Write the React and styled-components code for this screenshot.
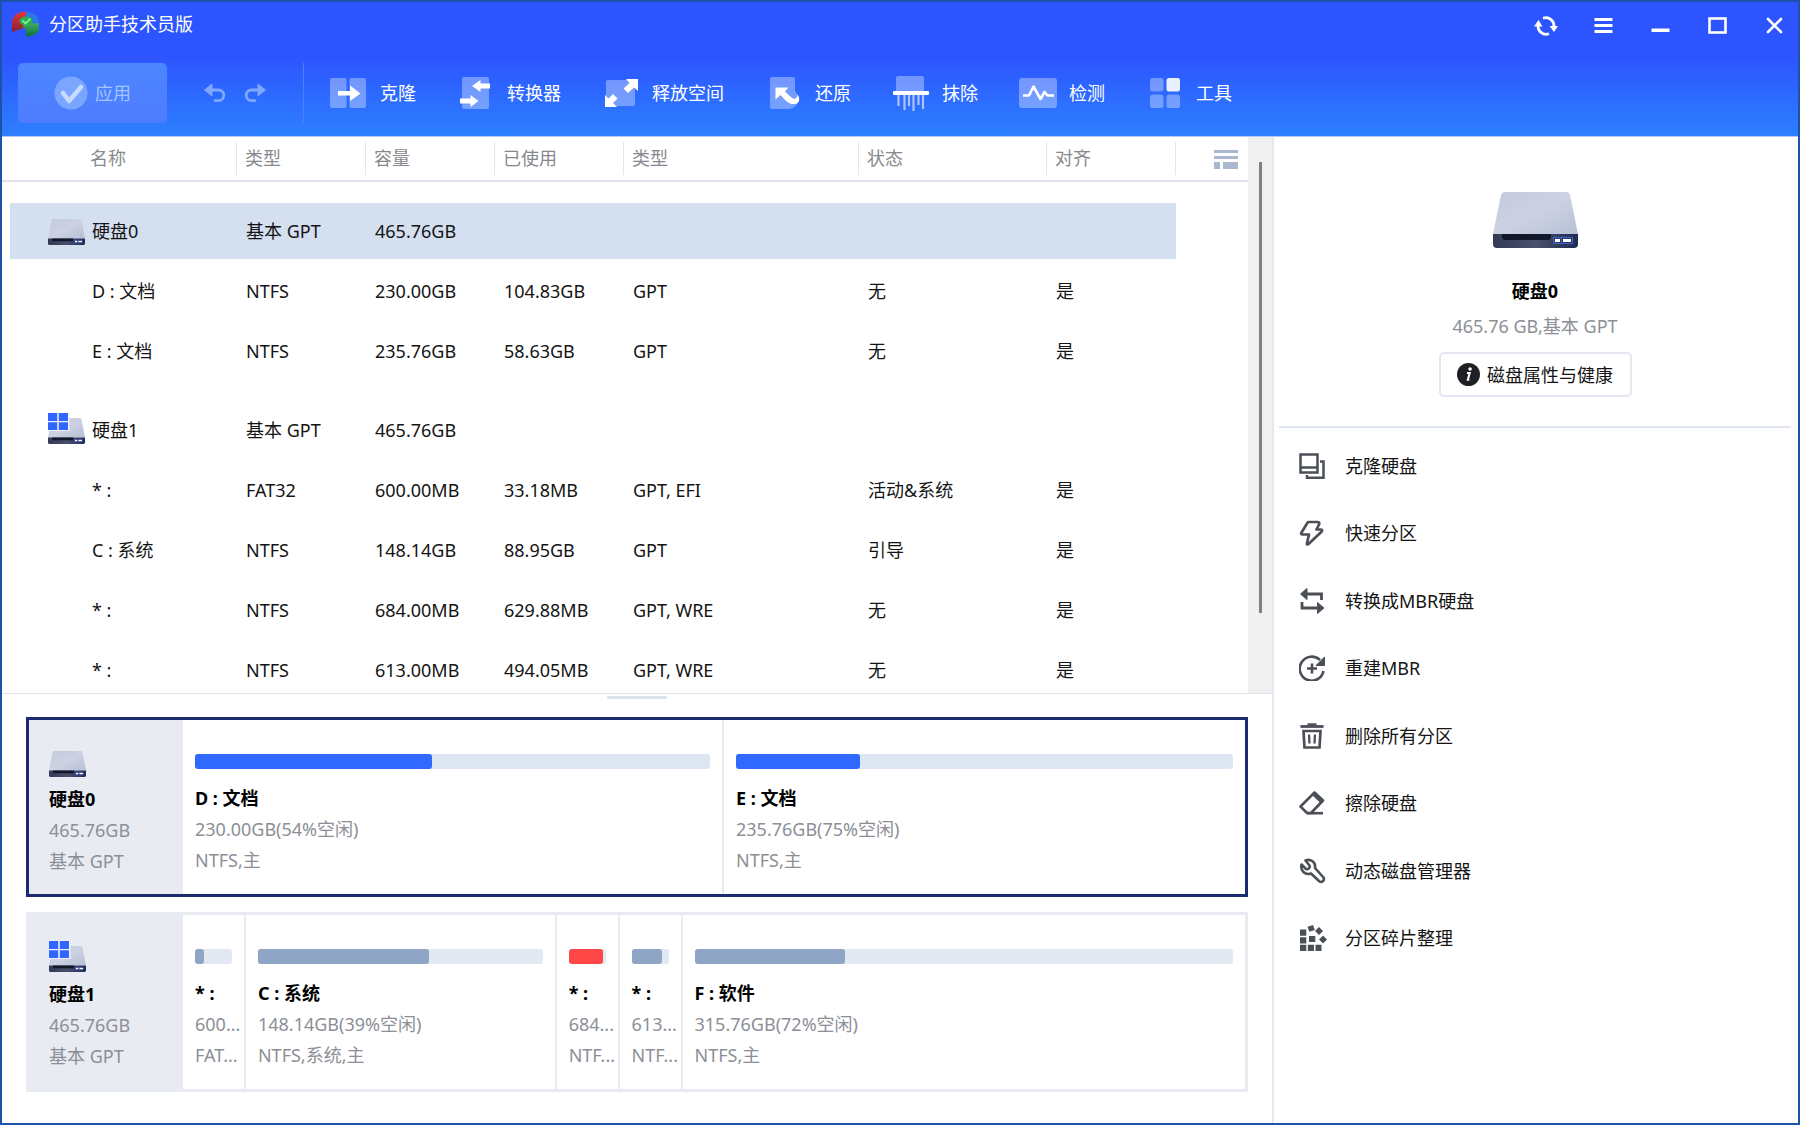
import React from "react";
import styled, { createGlobalStyle, css } from "styled-components";

const GlobalStyle = createGlobalStyle`
  *, *::before, *::after { box-sizing: border-box; }
  body {
    margin: 0;
    background: #fff;
    color: #141414;
    font: 18px/24px "Noto Sans", "Noto Sans CJK SC", sans-serif;
  }
  button {
    margin: 0;
    padding: 0;
    border: 0;
    background: none;
    color: inherit;
    font: inherit;
    cursor: pointer;
  }
  svg { display: block; flex: none; }
`;

/* ---------- window ---------- */

const Window = styled.div`
  display: flex;
  flex-direction: column;
  height: 100vh;
  border: 2px solid #1d52a8;
`;

const TopArea = styled.header`
  flex: none;
  color: #fff;
  background: linear-gradient(#2d55ff 0, #2d55ff 56px, #2d80ff 100%);
  border-bottom: 1px solid #b4c6f8;
`;

const TitleBar = styled.div`
  display: flex;
  align-items: center;
  justify-content: space-between;
  height: 44px;
  padding: 0 4px 0 9px;
`;

const Title = styled.h1`
  display: flex;
  align-items: center;
  gap: 9px;
  margin: 0;
  font-size: 18px;
  font-weight: 400;
`;

const WindowButtons = styled.div`
  display: flex;
  gap: 17px;
`;

const WindowButton = styled.button`
  display: grid;
  place-items: center;
  width: 40px;
  height: 40px;
  margin-top: 3px;
`;

const Toolbar = styled.nav`
  display: flex;
  align-items: center;
  padding: 17px 16px 13px;
`;

const ApplyButton = styled.button`
  display: flex;
  align-items: center;
  justify-content: center;
  gap: 7px;
  width: 149px;
  height: 60px;
  border-radius: 5px;
  color: #a3c4ff;
  background: linear-gradient(#4b86ff, #4f7cff);
`;

const HistoryButtons = styled.div`
  display: flex;
  gap: 16px;
  height: 60px;
  margin-right: 26px;
  padding: 0 36px;
  border-right: 1px solid #4f7fff;
  color: #80a8ff;
`;

const ToolList = styled.div`
  display: flex;
  gap: 41px;
`;

const ToolButton = styled.button`
  display: flex;
  align-items: center;
  gap: 12px;
  height: 60px;
  white-space: nowrap;
`;

const Body = styled.div`
  display: grid;
  grid-template-columns: minmax(0, 1fr) 526px;
  flex: 1;
  min-height: 0;
`;

const Main = styled.main`
  display: flex;
  flex-direction: column;
  min-height: 0;
`;

/* ---------- partition table ---------- */

const TablePane = styled.section`
  display: grid;
  grid-template-columns: minmax(0, 1fr) 24px;
  flex: 1;
  min-height: 0;
  border-bottom: 1px solid #dfe3ee;
`;

const TableScroll = styled.div`
  overflow-y: auto;
  scrollbar-width: none;
`;

const ScrollTrack = styled.div`
  padding: 25px 10px 0 11px;
  background: #f0f0f0;
`;

const ScrollThumb = styled.div`
  height: 85%;
  width: 3px;
  background: #808080;
`;

const Table = styled.table`
  width: 100%;
  table-layout: fixed;
  border-collapse: separate;
  border-spacing: 0;
`;

const HeadCell = styled.th`
  height: 45px;
  padding: 0;
  border-bottom: 2px solid #dfe3ee;
  color: #87898e;
  font-weight: 400;
  text-align: left;
`;

const HeadLabel = styled.div`
  height: 33px;
  padding-left: ${(p) => (p.$first ? "88px" : "8px")};
  border-right: 1px solid #e3e6f0;
  line-height: 32px;
`;

const ColumnsButton = styled.button`
  display: block;
  margin-left: auto;
  margin-right: 10px;
`;

const Cell = styled.td`
  height: ${(p) => (p.$disk ? "79px" : "60px")};
  padding: 0 0 0 9px;
  border: 0 solid transparent;
  border-top-width: ${(p) => (p.$disk ? "21px" : "2px")};
  border-bottom-width: 2px;
  background-clip: padding-box;
  background-color: ${(p) => (p.$selected ? "#d4dfef" : "transparent")};
  white-space: nowrap;
  ${(p) =>
    p.$first &&
    css`
      padding-left: ${p.$disk ? "38px" : "82px"};
      border-left-width: 8px;
    `}
`;

const DiskName = styled.div`
  display: flex;
  align-items: center;
  gap: 7px;
`;

/* ---------- disk maps ---------- */

const MapPane = styled.section`
  display: flex;
  flex-direction: column;
  gap: 15px;
  flex: none;
  padding: 0 24px 31px;
`;

const SplitHandle = styled.div`
  align-self: center;
  width: 60px;
  height: 3px;
  margin: 2px 0 3px;
  background: #dde4f0;
`;

const DiskMap = styled.article`
  display: grid;
  grid-template-columns: 154px ${(p) => p.$weights.map((w) => `minmax(0, ${w}fr)`).join(" ")};
  border: 3px solid ${(p) => (p.$selected ? "#1c2a72" : "#e9ebf3")};
`;

const DiskSummary = styled.div`
  display: flex;
  flex-direction: column;
  gap: 4px;
  padding: 26px 20px 17px;
  background: #e9ebf3;
`;

const Partition = styled.div`
  padding: 34px 0 18px 12px;
  & + & {
    border-left: 2px solid #e9ebf3;
  }
`;

const UsageTrack = styled.div`
  height: 15px;
  margin: 0 12px 14px 0;
  border-radius: 3px;
  background: ${(p) => (p.$active ? "#dde6f2" : "#e3e9f3")};
`;

const fills = { blue: "#2f69ff", grey: "#8fa5c5", red: "#ff4747" };

const UsageFill = styled.div`
  height: 100%;
  border-radius: 3px;
  background: ${(p) => fills[p.$tone]};
`;

const InfoLine = styled.p`
  margin: 0;
  color: #8c8f96;
  line-height: 31px;
  white-space: nowrap;
`;

const InfoName = styled(InfoLine)`
  color: #000;
  font-weight: 700;
`;

/* ---------- side panel ---------- */

const Side = styled.aside`
  border-left: 2px solid #e3e8f1;
  padding: 0 7px 0 5px;
`;

const SideHead = styled.div`
  display: flex;
  flex-direction: column;
  align-items: center;
  padding: 55px 0 29px;
  border-bottom: 2px solid #e1e7f1;
`;

const SideName = styled.h2`
  margin: 28px 0 0;
  color: #000;
  font-size: 18px;
  line-height: 31px;
`;

const SideInfo = styled.p`
  margin: 4px 0 10px;
  color: #8c8f96;
  line-height: 31px;
`;

const HealthButton = styled.button`
  display: flex;
  align-items: center;
  justify-content: center;
  gap: 7px;
  width: 193px;
  height: 45px;
  border: 2px solid #e3e7ef;
  border-radius: 5px;
`;

const ActionList = styled.ul`
  display: grid;
  grid-template-rows: repeat(8, 1fr);
  height: 540px;
  margin: 4px 0 0;
  padding: 0;
  list-style: none;
`;

const ActionButton = styled.button`
  display: flex;
  align-items: center;
  gap: 18px;
  width: 100%;
  height: 100%;
  padding-left: 20px;
  color: #141414;
  text-align: left;
`;

/* ---------- icons ---------- */

const Logo = () => (
  <svg width="29" height="26" viewBox="0 0 29 26" aria-hidden="true">
    <defs>
      <linearGradient id="logoGreen" x1="0" y1="0" x2="0" y2="1">
        <stop offset="0" stopColor="#3fae62" />
        <stop offset="1" stopColor="#0f6a3c" />
      </linearGradient>
      <linearGradient id="logoRed" x1="0" y1="0" x2="0" y2="1">
        <stop offset="0" stopColor="#e2383d" />
        <stop offset="1" stopColor="#8a1e30" />
      </linearGradient>
    </defs>
    <path d="M14 1C22 1 28 5 28 10l-1 4-13-4z" fill="#2b78e6" />
    <path d="M1 11C2 4 8 0 15 1v10l-2 6-12 4z" fill="url(#logoRed)" />
    <path d="M14 13l14-1v7c-1 4-7 6-13 7v-8l-4-2z" fill="url(#logoGreen)" />
    <ellipse cx="15" cy="10" rx="6.500" ry="4.500" fill="#2fae4d" />
    <path d="M11.500 9.500l3 3 5-5" fill="none" stroke="#7dff9c" strokeWidth="1.600" />
  </svg>
);

const RefreshIcon = () => (
  <svg width="24" height="20" viewBox="0 0 24 20" aria-hidden="true">
    <path d="M9 2.2A8 7.6 0 0 1 19.6 11" fill="none" stroke="#fff" strokeWidth="2.8" />
    <path d="M15 17.8A8 7.6 0 0 1 4.4 9" fill="none" stroke="#fff" strokeWidth="2.8" />
    <path d="M15.500 10H24l-4 6z" fill="#fff" />
    <path d="M0 10.500h8.500L4.500 4z" fill="#fff" />
  </svg>
);

const MenuIcon = () => (
  <svg width="19" height="17" viewBox="0 0 19 17" fill="#fff" aria-hidden="true">
    <path d="M.5 1h18v3H.5zM.5 7h18v3H.5zM.5 13h18v3H.5z" />
  </svg>
);

const MinimizeIcon = () => (
  <svg width="19" height="18" viewBox="0 0 19 18" aria-hidden="true">
    <path d="M.5 11.500h18v3.500H.5z" fill="#fff" />
  </svg>
);

const MaximizeIcon = () => (
  <svg width="19" height="18" viewBox="0 0 19 18" aria-hidden="true">
    <rect x="1.500" y="1.500" width="16" height="14" fill="none" stroke="#fff" strokeWidth="2.600" />
  </svg>
);

const CloseIcon = () => (
  <svg width="17" height="17" viewBox="0 0 17 17" aria-hidden="true">
    <path d="M2 2l13 13M15 2L2 15" stroke="#fff" strokeWidth="2.600" strokeLinecap="round" />
  </svg>
);

const ApplyIcon = () => (
  <svg width="34" height="34" viewBox="0 0 34 34" aria-hidden="true">
    <circle cx="17" cy="17" r="16.500" fill="#7ba6ff" />
    <path d="M9 17l6 8 12-14" fill="none" stroke="#c6dbff" strokeWidth="4.500" strokeLinecap="round" strokeLinejoin="round" />
  </svg>
);

const UndoIcon = ({ flip }) => (
  <svg width="24" height="20" viewBox="0 0 24 20" aria-hidden="true">
    <g transform={flip ? "matrix(-1 0 0 1 24 0)" : undefined}>
      <path d="M6 7h9.500a5.300 5.300 0 0 1 0 10.600H12" fill="none" stroke="currentColor" strokeWidth="2.800" strokeLinecap="round" />
      <path d="M1.500 7L9 1v12z" fill="currentColor" stroke="currentColor" strokeLinejoin="round" />
    </g>
  </svg>
);

const pale = "rgba(255,255,255,0.34)";
const white = "#fff";

const toolShapes = {
  clone: (
    <>
      <rect x="0" y="4" width="16.500" height="30" rx="2" fill={pale} />
      <rect x="19.500" y="4" width="16.500" height="30" rx="2" fill={pale} />
      <path d="M8 17H20v-5.500l10.500 8L20 27v-5.500H8z" fill={white} />
    </>
  ),
  convert: (
    <>
      <rect x="5" y="3" width="27" height="32" rx="2" fill={pale} />
      <path d="M33 9.500H23.500V6L15 12l8.500 6v-3.500H33z" fill={white} />
      <path d="M3 24.500h10.500V21l8 6-8 6v-3.500H3z" fill={white} />
    </>
  ),
  expand: (
    <>
      <rect x="4" y="6" width="29" height="26" rx="2" fill={pale} />
      <path d="M24 5h12v12l-4-3.500-6 5.500-4.500-4.500 6-5.500z" fill={white} />
      <path d="M15 33H3V21l3.500 3.500L11 20l4.500 4.500L11 29z" fill={white} />
    </>
  ),
  restore: (
    <>
      <path d="M7 3h21a2 2 0 0 1 2 2v12l4 6c0 7-4 11-10 12H7a2 2 0 0 1-2-2V5a2 2 0 0 1 2-2z" fill={pale} />
      <path d="M10.500 13.500h13l-3.500 4 6.500 6c3 2.500 6 1 6-3 3 4.500 2 9-3 9.500-4 .5-7-1-14-9l-5 4.500z" fill={white} />
    </>
  ),
  wipe: (
    <>
      <path d="M6 2h24a2 2 0 0 1 2 2v13H4V4a2 2 0 0 1 2-2z" fill={pale} />
      <path d="M6.500 21v11M12.500 21v15M17 21v11M21.500 21v16M26.500 21v10M31 21v14" stroke="rgba(255,255,255,0.6)" strokeWidth="2.200" />
      <rect x="1" y="17" width="36" height="4" rx="1" fill={white} />
    </>
  ),
  check: (
    <>
      <rect x="0" y="4" width="38" height="30" rx="3" fill={pale} />
      <path d="M4 21.500h6l4.500-9 7 12.500 4-7 3 3.500H35" fill="none" stroke={white} strokeWidth="2.600" strokeLinejoin="round" />
    </>
  ),
  tools: (
    <>
      <rect x="4" y="4" width="13.500" height="13.500" rx="2.500" fill={pale} />
      <rect x="20.500" y="4" width="13.500" height="13.500" rx="2.500" fill="#e8efff" />
      <rect x="4" y="20.500" width="13.500" height="13.500" rx="2.500" fill={pale} />
      <rect x="20.500" y="20.500" width="13.500" height="13.500" rx="2.500" fill={pale} />
    </>
  ),
};

const ToolIcon = ({ name }) => (
  <svg width="38" height="38" viewBox="0 0 38 38" aria-hidden="true">
    {toolShapes[name]}
  </svg>
);

const ColumnsIcon = () => (
  <svg width="24" height="20" viewBox="0 0 24 20" fill="#a9b7cf" aria-hidden="true">
    <path d="M0 1h24v3H0zM0 7h24v3H0zM0 13h6v7H0zM9 13h15v7H9z" />
  </svg>
);

const DriveShape = () => (
  <>
    <defs>
      <linearGradient id="driveTop" x1="0" y1="0" x2="1" y2="1">
        <stop offset="0" stopColor="#c3cadc" />
        <stop offset=".5" stopColor="#ccd2e2" />
        <stop offset="1" stopColor="#b7bfd6" />
      </linearGradient>
      <linearGradient id="driveFront" x1="0" y1="0" x2="1" y2="0">
        <stop offset="0" stopColor="#333a56" />
        <stop offset=".5" stopColor="#4a4f6b" />
        <stop offset="1" stopColor="#1f2a55" />
      </linearGradient>
    </defs>
    <path d="M12 0h61q3 0 4 3l8 39H0L8 3q1-3 4-3z" fill="url(#driveTop)" />
    <path d="M0 42h85v10q0 4-4 4H4q-4 0-4-4z" fill="url(#driveFront)" />
    <path d="M9 42h49v3q0 3-3 3H12q-3 0-3-3z" fill="#12182c" />
    <path d="M60.500 45.500h8v6h-8zM68.500 45.500h11v6h-11z" fill="none" stroke="#3f63c8" />
    <rect x="62" y="47" width="5" height="3" fill="#fff" />
    <rect x="70" y="47" width="8" height="3" fill="#fff" />
  </>
);

const DriveIcon = ({ windows }) => (
  <svg width="37" height="34" viewBox="0 0 37 34" aria-hidden="true">
    <svg x="0" y="5" width="37" height="26" viewBox="0 0 85 56" preserveAspectRatio="none">
      <DriveShape />
    </svg>
    {windows && (
      <>
        <path d="M0 0h21.500v18H0z" fill="#eef1f8" />
        <path d="M0 0h9.200v8H0zM10.800 0h9.200v8h-9.200zM0 9.200h9.200v7.800H0zM10.800 9.200h9.200v7.800h-9.200z" fill="#2f66ff" />
      </>
    )}
  </svg>
);

const InfoIcon = () => (
  <svg width="23" height="23" viewBox="0 0 22 22" aria-hidden="true">
    <circle cx="11" cy="11" r="11" fill="#1e2024" />
    <circle cx="12.500" cy="5.800" r="1.700" fill="#fff" />
    <path d="M9.500 9.500h2.600l-1.700 6.500h1.400" fill="none" stroke="#fff" strokeWidth="2" />
  </svg>
);

const ink = "#4b4f56";

const actionShapes = {
  clone: (
    <g fill="none" stroke={ink} strokeWidth="2.500">
      <path d="M1.500 1.500h17v18h-17zM1.500 14.500h17" />
      <path d="M21 8.500h3.500v16.200H8V22" />
    </g>
  ),
  bolt: (
    <path d="M9 2h9.500q2.500 0 1.500 2.500l-2.500 5h4q2.500 0 1 2.300L9.500 24q-2 1.500-1.500-1l2-8.500H3.500q-2 0-1-2z" fill="none" stroke={ink} strokeWidth="2.700" strokeLinejoin="round" />
  ),
  swap: (
    <g>
      <path d="M6 6h16.500v6M3 14v6h17" fill="none" stroke={ink} strokeWidth="2.800" />
      <path d="M1.500 6L8 .5v11zM25 20l-6.500-5.500v11z" fill={ink} stroke={ink} strokeLinejoin="round" />
    </g>
  ),
  rebuild: (
    <g>
      <path d="M21 5a12 12 0 1 0 3.500 11" fill="none" stroke={ink} strokeWidth="2.600" />
      <path d="M13 8.500v10M8 13.500h10" stroke={ink} strokeWidth="2.600" />
      <path d="M25.500 2v8.500H17z" fill={ink} stroke={ink} strokeLinejoin="round" />
    </g>
  ),
  trash: (
    <g fill="none" stroke={ink}>
      <path d="M1.500 3.500h23" strokeWidth="2.800" />
      <path d="M8.500 1.500h9" strokeWidth="2.500" />
      <path d="M4.500 8h17l-1 16.500h-15z" strokeWidth="2.700" />
      <path d="M10 11.500l.5 9M16 11.500l-.5 9" strokeWidth="2.300" />
    </g>
  ),
  eraser: (
    <g>
      <path d="M15.500 2.500l8.500 8L12 23H8l-6.500-6.500z" fill="none" stroke={ink} strokeWidth="2.600" strokeLinejoin="round" />
      <path d="M15.500 1.500l9.500 9-3 3-9.500-9z" fill={ink} />
      <path d="M8 23.200h16" stroke={ink} strokeWidth="2.600" />
    </g>
  ),
  wrench: (
    <path
      d="M6.500 2.500c5-2 10.500 1.500 9.500 7.500l8.500 9.500c1.500 2.500-1.500 5.500-4 4L12 15.500C6 17.500 1 12.500 2.500 6.500l4.500 4.500c2 1 4.500-1.500 3.500-3.500z"
      fill="none"
      stroke={ink}
      strokeWidth="2.600"
      strokeLinejoin="round"
    />
  ),
  defrag: (
    <g fill={ink}>
      <path d="M1 4.500h6.300v6.300H1zM1 12.200h6.300v6.300H1zM1 19.800h6.300v6.200H1zM8.800 19.800h6.200v6.200H8.800zM16.500 19.800h6v6.200h-6z" />
      <rect x="10" y="11" width="6.300" height="6" />
      <path d="M8.500 1.800L14 0l1.800 5-5.500 1.800zM20 2l4 4-4 4-4-4zM24 10.500l4 4-4 4-4-4z" />
    </g>
  ),
};

const ActionIcon = ({ name }) => (
  <svg width="28" height="26" viewBox="0 0 28 26" aria-hidden="true">
    {actionShapes[name]}
  </svg>
);

/* ---------- data ---------- */

const tools = [
  ["clone", "克隆"],
  ["convert", "转换器"],
  ["expand", "释放空间"],
  ["restore", "还原"],
  ["wipe", "抹除"],
  ["check", "检测"],
  ["tools", "工具"],
];

const columns = ["名称", "类型", "容量", "已使用", "类型", "状态", "对齐"];

const rows = [
  { disk: true, selected: true, cells: ["硬盘0", "基本 GPT", "465.76GB", "", "", "", ""] },
  { cells: ["D : 文档", "NTFS", "230.00GB", "104.83GB", "GPT", "无", "是"] },
  { cells: ["E : 文档", "NTFS", "235.76GB", "58.63GB", "GPT", "无", "是"] },
  { disk: true, windows: true, cells: ["硬盘1", "基本 GPT", "465.76GB", "", "", "", ""] },
  { cells: ["* :", "FAT32", "600.00MB", "33.18MB", "GPT, EFI", "活动&系统", "是"] },
  { cells: ["C : 系统", "NTFS", "148.14GB", "88.95GB", "GPT", "引导", "是"] },
  { cells: ["* :", "NTFS", "684.00MB", "629.88MB", "GPT, WRE", "无", "是"] },
  { cells: ["* :", "NTFS", "613.00MB", "494.05MB", "GPT, WRE", "无", "是"] },
];

const disks = [
  {
    name: "硬盘0",
    selected: true,
    partitions: [
      { name: "D : 文档", size: "230.00GB(54%空闲)", type: "NTFS,主", used: 46, weight: 539, tone: "blue" },
      { name: "E : 文档", size: "235.76GB(75%空闲)", type: "NTFS,主", used: 25, weight: 523, tone: "blue" },
    ],
  },
  {
    name: "硬盘1",
    windows: true,
    partitions: [
      { name: "* :", size: "600...", type: "FAT...", used: 25, weight: 61, tone: "grey" },
      { name: "C : 系统", size: "148.14GB(39%空闲)", type: "NTFS,系统,主", used: 60, weight: 311, tone: "grey" },
      { name: "* :", size: "684...", type: "NTF...", used: 92, weight: 63, tone: "red" },
      { name: "* :", size: "613...", type: "NTF...", used: 81, weight: 63, tone: "grey" },
      { name: "F : 软件", size: "315.76GB(72%空闲)", type: "NTFS,主", used: 28, weight: 565, tone: "grey" },
    ],
  },
];

const actions = [
  ["clone", "克隆硬盘"],
  ["bolt", "快速分区"],
  ["swap", "转换成MBR硬盘"],
  ["rebuild", "重建MBR"],
  ["trash", "删除所有分区"],
  ["eraser", "擦除硬盘"],
  ["wrench", "动态磁盘管理器"],
  ["defrag", "分区碎片整理"],
];

/* ---------- sections ---------- */

const Header = () => (
  <TopArea>
    <TitleBar>
      <Title>
        <Logo />
        分区助手技术员版
      </Title>
      <WindowButtons>
        <WindowButton aria-label="刷新"><RefreshIcon /></WindowButton>
        <WindowButton aria-label="菜单"><MenuIcon /></WindowButton>
        <WindowButton aria-label="最小化"><MinimizeIcon /></WindowButton>
        <WindowButton aria-label="最大化"><MaximizeIcon /></WindowButton>
        <WindowButton aria-label="关闭"><CloseIcon /></WindowButton>
      </WindowButtons>
    </TitleBar>
    <Toolbar>
      <ApplyButton>
        <ApplyIcon />
        应用
      </ApplyButton>
      <HistoryButtons>
        <button aria-label="撤销"><UndoIcon /></button>
        <button aria-label="重做"><UndoIcon flip /></button>
      </HistoryButtons>
      <ToolList>
        {tools.map(([icon, label]) => (
          <ToolButton key={icon}>
            <ToolIcon name={icon} />
            {label}
          </ToolButton>
        ))}
      </ToolList>
    </Toolbar>
  </TopArea>
);

const PartitionTable = () => (
  <TablePane>
    <TableScroll>
      <Table>
        <colgroup>
          <col width="235" />
          <col width="129" />
          <col width="129" />
          <col width="129" />
          <col />
          <col width="188" />
          <col width="129" />
          <col width="72" />
        </colgroup>
        <thead>
          <tr>
            {columns.map((label, i) => (
              <HeadCell key={i} scope="col">
                <HeadLabel $first={i === 0}>{label}</HeadLabel>
              </HeadCell>
            ))}
            <HeadCell>
              <ColumnsButton aria-label="选择列"><ColumnsIcon /></ColumnsButton>
            </HeadCell>
          </tr>
        </thead>
        <tbody>
          {rows.map((row, r) => (
            <tr key={r}>
              {row.cells.map((text, i) => (
                <Cell key={i} $first={i === 0} $disk={row.disk} $selected={row.selected}>
                  {row.disk && i === 0 ? (
                    <DiskName>
                      <DriveIcon windows={row.windows} />
                      {text}
                    </DiskName>
                  ) : (
                    text
                  )}
                </Cell>
              ))}
            </tr>
          ))}
        </tbody>
      </Table>
    </TableScroll>
    <ScrollTrack>
      <ScrollThumb />
    </ScrollTrack>
  </TablePane>
);

const DiskMaps = () => (
  <MapPane>
    <SplitHandle />
    {disks.map((disk) => (
      <DiskMap
        key={disk.name}
        $selected={disk.selected}
        $weights={disk.partitions.map((part) => part.weight)}
      >
        <DiskSummary>
          <DriveIcon windows={disk.windows} />
          <div>
            <InfoName>{disk.name}</InfoName>
            <InfoLine>465.76GB</InfoLine>
            <InfoLine>基本 GPT</InfoLine>
          </div>
        </DiskSummary>
        {disk.partitions.map((part, i) => (
          <Partition key={i}>
            <UsageTrack $active={disk.selected}>
              <UsageFill $tone={part.tone} style={{ width: `${part.used}%` }} />
            </UsageTrack>
            <InfoName>{part.name}</InfoName>
            <InfoLine>{part.size}</InfoLine>
            <InfoLine>{part.type}</InfoLine>
          </Partition>
        ))}
      </DiskMap>
    ))}
  </MapPane>
);

const SidePanel = () => (
  <Side>
    <SideHead>
      <svg width="85" height="56" viewBox="0 0 85 56" aria-hidden="true">
        <DriveShape />
      </svg>
      <SideName>硬盘0</SideName>
      <SideInfo>465.76 GB,基本 GPT</SideInfo>
      <HealthButton>
        <InfoIcon />
        磁盘属性与健康
      </HealthButton>
    </SideHead>
    <ActionList>
      {actions.map(([icon, label]) => (
        <li key={icon}>
          <ActionButton>
            <ActionIcon name={icon} />
            {label}
          </ActionButton>
        </li>
      ))}
    </ActionList>
  </Side>
);

export default function App() {
  return (
    <>
      <GlobalStyle />
      <Window>
        <Header />
        <Body>
          <Main>
            <PartitionTable />
            <DiskMaps />
          </Main>
          <SidePanel />
        </Body>
      </Window>
    </>
  );
}
